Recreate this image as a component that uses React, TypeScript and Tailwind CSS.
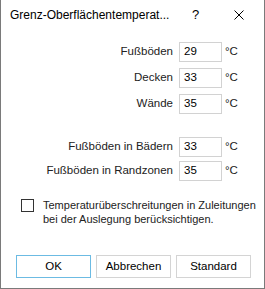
export default function App() {
  const font = { fontFamily: '"Segoe UI", "Liberation Sans", Arial, sans-serif' }

  const upper = [
    { label: "Fußböden", value: "29" },
    { label: "Decken", value: "33" },
    { label: "Wände", value: "35" },
  ]
  const lower = [
    { label: "Fußböden in Bädern", value: "33" },
    { label: "Fußböden in Randzonen", value: "35" },
  ]

  const Row = ({ label, value }: { label: string; value: string }) => (
    <div className="flex items-center justify-end h-[20px] pr-[22px]">
      <span className="text-[11.5px] text-[#222]">{label}</span>
      <div className="ml-[6px] w-[43px] h-[20px] border border-[#d2d2d2] bg-white flex items-center pl-[4px] text-[11.5px] text-black">
        {value}
      </div>
      <span className="ml-[3px] w-[17px] text-[11.5px] text-[#222]">°C</span>
    </div>
  )

  return (
    <div
      className="w-[265px] h-[289px] bg-white border-l border-r border-b border-[#7a7a7a] flex flex-col"
      style={font}
    >
      {/* Title bar */}
      <div className="h-[30px] flex items-center pl-[9px] shrink-0">
        <span className="w-[182px] text-[12px] text-black whitespace-nowrap">Grenz-Oberflächentemperat...</span>
        <span className="w-[42px] text-[13px] text-black">?</span>
        <svg width="10" height="10" viewBox="0 0 10 10">
          <path d="M0.5 0.5 L9.5 9.5 M9.5 0.5 L0.5 9.5" stroke="#000" strokeWidth="1" />
        </svg>
      </div>

      <div className="mt-[12px] flex flex-col gap-[6px]">
        {upper.map((r) => (
          <Row key={r.label} {...r} />
        ))}
      </div>

      <div className="mt-[23px] flex flex-col gap-[4px]">
        {lower.map((r) => (
          <Row key={r.label} {...r} />
        ))}
      </div>

      <div className="mt-[18px] flex items-start pl-[20px]">
        <div className="w-[13px] h-[13px] border border-[#333] bg-white shrink-0" />
        <p className="ml-[9px] -mt-[1px] text-[11px] leading-[14px] text-[#222] whitespace-nowrap">
          Temperaturüberschreitungen in Zuleitungen
          <br />
          bei der Auslegung berücksichtigen.
        </p>
      </div>

      <div className="mt-auto mb-[10px] flex gap-[5px] pl-[15px]">
        <button className="w-[75px] h-[23px] border border-[#6cbbe3] bg-white text-[11.5px] text-black">OK</button>
        <button className="w-[75px] h-[23px] border border-[#d4d4d4] bg-white text-[11.5px] text-black">Abbrechen</button>
        <button className="w-[75px] h-[23px] border border-[#d4d4d4] bg-white text-[11.5px] text-black">Standard</button>
      </div>
    </div>
  )
}
